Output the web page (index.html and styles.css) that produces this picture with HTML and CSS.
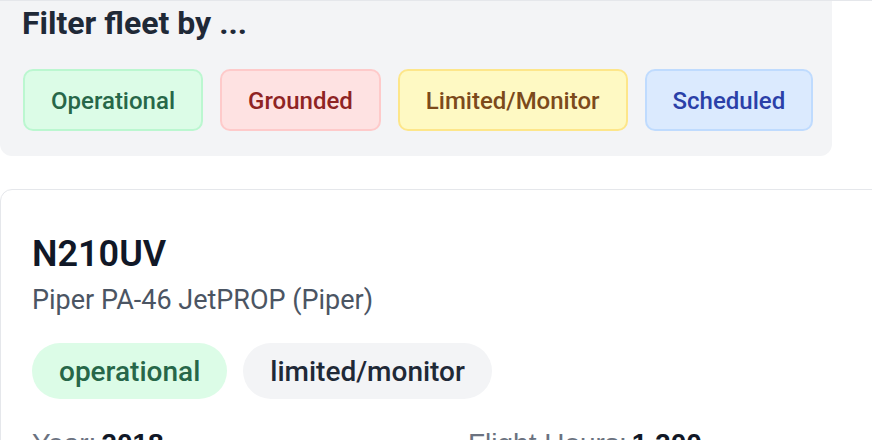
FILE: index.html
```html
<!DOCTYPE html>
<html lang="en">
<head>
<meta charset="utf-8">
<title>Fleet</title>
<link rel="stylesheet" href="styles.css">
</head>
<body>
<div class="page">
  <div class="top-rule"></div>
  <section class="filter-panel">
    <h2 class="filter-title">Filter fleet by ...</h2>
    <div class="filter-buttons">
      <button class="fbtn fbtn-green">Operational</button>
      <button class="fbtn fbtn-red">Grounded</button>
      <button class="fbtn fbtn-yellow">Limited/Monitor</button>
      <button class="fbtn fbtn-blue">Scheduled</button>
    </div>
  </section>
  <article class="card">
    <h3 class="tail">N210UV</h3>
    <p class="model">Piper PA-46 JetPROP (Piper)</p>
    <div class="pills">
      <span class="pill pill-green">operational</span>
      <span class="pill pill-gray">limited/monitor</span>
    </div>
    <div class="stats">
      <div class="stat"><span class="stat-label">Year:</span><span class="stat-value">2018</span></div>
      <div class="stat"><span class="stat-label">Flight Hours:</span><span class="stat-value">1,200</span></div>
    </div>
  </article>
</div>
</body>
</html>
```
FILE: styles.css
```css
html, body {
  margin: 0;
  padding: 0;
  background: #ffffff;
  overflow: hidden;
}
.page {
  width: 920px;
  font-family: Roboto, "Liberation Sans", sans-serif;
}
.top-rule {
  height: 1px;
  background: #e5e7eb;
}
.filter-panel {
  width: 832px;
  box-sizing: border-box;
  background: #f3f4f6;
  border-radius: 0 0 12px 12px;
  padding: 2px 22px 25px 22px;
}
.filter-title {
  margin: 0;
  font-size: 32px;
  line-height: 40px;
  font-weight: 700;
  color: #1f2937;
}
.filter-buttons {
  display: flex;
  gap: 17px;
  margin-top: 26px;
  padding-left: 1px;
}
.fbtn {
  height: 62px;
  box-sizing: border-box;
  border: 2px solid;
  border-radius: 10px;
  padding: 2px 26px 0 26px;
  font-family: Roboto, sans-serif;
  font-size: 24px;
  font-weight: 500;
  background: none;
  cursor: pointer;
}
.fbtn-green { background: #dcfce7; border-color: #bbf7d0; color: #276749; }
.fbtn-red { background: #fee2e2; border-color: #fecaca; color: #8f2424; }
.fbtn-yellow { background: #fef9c3; border-color: #fde68a; color: #7c4a1b; }
.fbtn-blue { background: #dbeafe; border-color: #bfdbfe; color: #2a40a8; }

.card {
  margin-top: 33px;
  border: 1px solid #e5e7eb;
  border-radius: 12px;
  padding: 42px 31px 32px 31px;
}
.tail {
  margin: 0;
  font-size: 36px;
  line-height: 44px;
  font-weight: 600;
  color: #111827;
}
.model {
  margin: 6px 0 0 0;
  font-size: 27px;
  line-height: 36px;
  color: #4b5563;
}
.pills {
  display: flex;
  gap: 16px;
  margin-top: 25px;
}
.pill {
  height: 56px;
  box-sizing: border-box;
  display: inline-flex;
  align-items: center;
  padding: 0 27px;
  border-radius: 999px;
  font-size: 28px;
  font-weight: 500;
}
.pill-green { background: #dcfce7; color: #276749; }
.pill-gray { background: #f3f4f6; color: #1f2937; }
.stats {
  display: grid;
  grid-template-columns: 1fr 1fr;
  gap: 16px;
  margin-top: 27px;
  font-family: "Liberation Sans", Arial, sans-serif;
  font-size: 28px;
  line-height: 36px;
}
.stat-label { color: #6b7280; }
.stat-value { color: #111827; font-weight: 700; margin-left: 5px; }
```
